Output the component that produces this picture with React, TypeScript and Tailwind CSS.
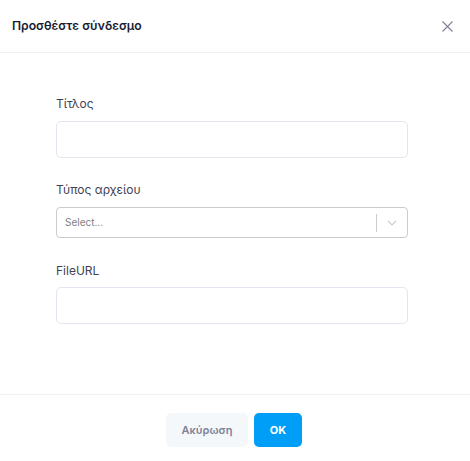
import React from "react";

const labelCls = "block text-[12px] leading-[18px] text-[#3f4254] mb-2";
const inputCls =
  "w-full h-[37px] rounded-[5px] border border-[#e4e6ef] bg-white px-3 text-[12px] text-[#5e6278] outline-none";

const App: React.FC = () => {
  return (
    <div
      className="w-[470px] h-[461px] bg-white overflow-hidden flex flex-col"
      style={{ fontFamily: "Inter, 'Noto Sans', sans-serif" }}
    >
      {/* header */}
      <div className="h-[53px] flex items-center justify-between pl-3 pr-[13px] border-b border-[#eff2f5] shrink-0">
        <h3 className="text-[12.2px] font-semibold text-[#181c32]">Προσθέστε σύνδεσμο</h3>
        <button className="w-5 h-5 flex items-center justify-center text-[#7e8299]">
          <svg width="11" height="11" viewBox="0 0 11 11" fill="none">
            <path d="M0.5 0.5L10.5 10.5M10.5 0.5L0.5 10.5" stroke="currentColor" strokeWidth="1.1" />
          </svg>
        </button>
      </div>

      {/* body */}
      <div className="pt-[42px] pl-[56px] w-[408px] h-[341px] shrink-0">
        <div className="mb-[23px]">
          <label className={labelCls}>Τίτλος</label>
          <input className={inputCls} />
        </div>
        <div className="mb-[24px]">
          <label className={labelCls}>Τύπος αρχείου</label>
          <div className="h-[31px] rounded-[4px] border border-[#cccccc] flex items-center">
            <span className="flex-1 pl-2 text-[10px] text-[#808080]">Select...</span>
            <span className="w-px h-[18px] bg-[#cccccc]" />
            <span className="w-[30px] flex items-center justify-center text-[#cccccc]">
              <svg width="10" height="6" viewBox="0 0 10 6" fill="none">
                <path d="M1 1L5 5L9 1" stroke="currentColor" strokeWidth="1.2" />
              </svg>
            </span>
          </div>
        </div>
        <div>
          <label className="block text-[12px] leading-[18px] text-[#3f4254] mb-[7px]">FileURL</label>
          <input className={inputCls} />
        </div>
      </div>

      {/* footer */}
      <div className="border-t border-[#eff2f5] flex justify-center gap-[6px] pt-[18px] pr-[2px]">
        <button className="w-[82px] h-[34px] rounded-[5px] bg-[#f5f8fa] text-[11px] font-semibold text-[#7e8299]">
          Ακύρωση
        </button>
        <button className="w-[48px] h-[34px] rounded-[5px] bg-[#009ef7] text-[11px] font-bold text-white">
          OK
        </button>
      </div>
    </div>
  );
};

export default App;
